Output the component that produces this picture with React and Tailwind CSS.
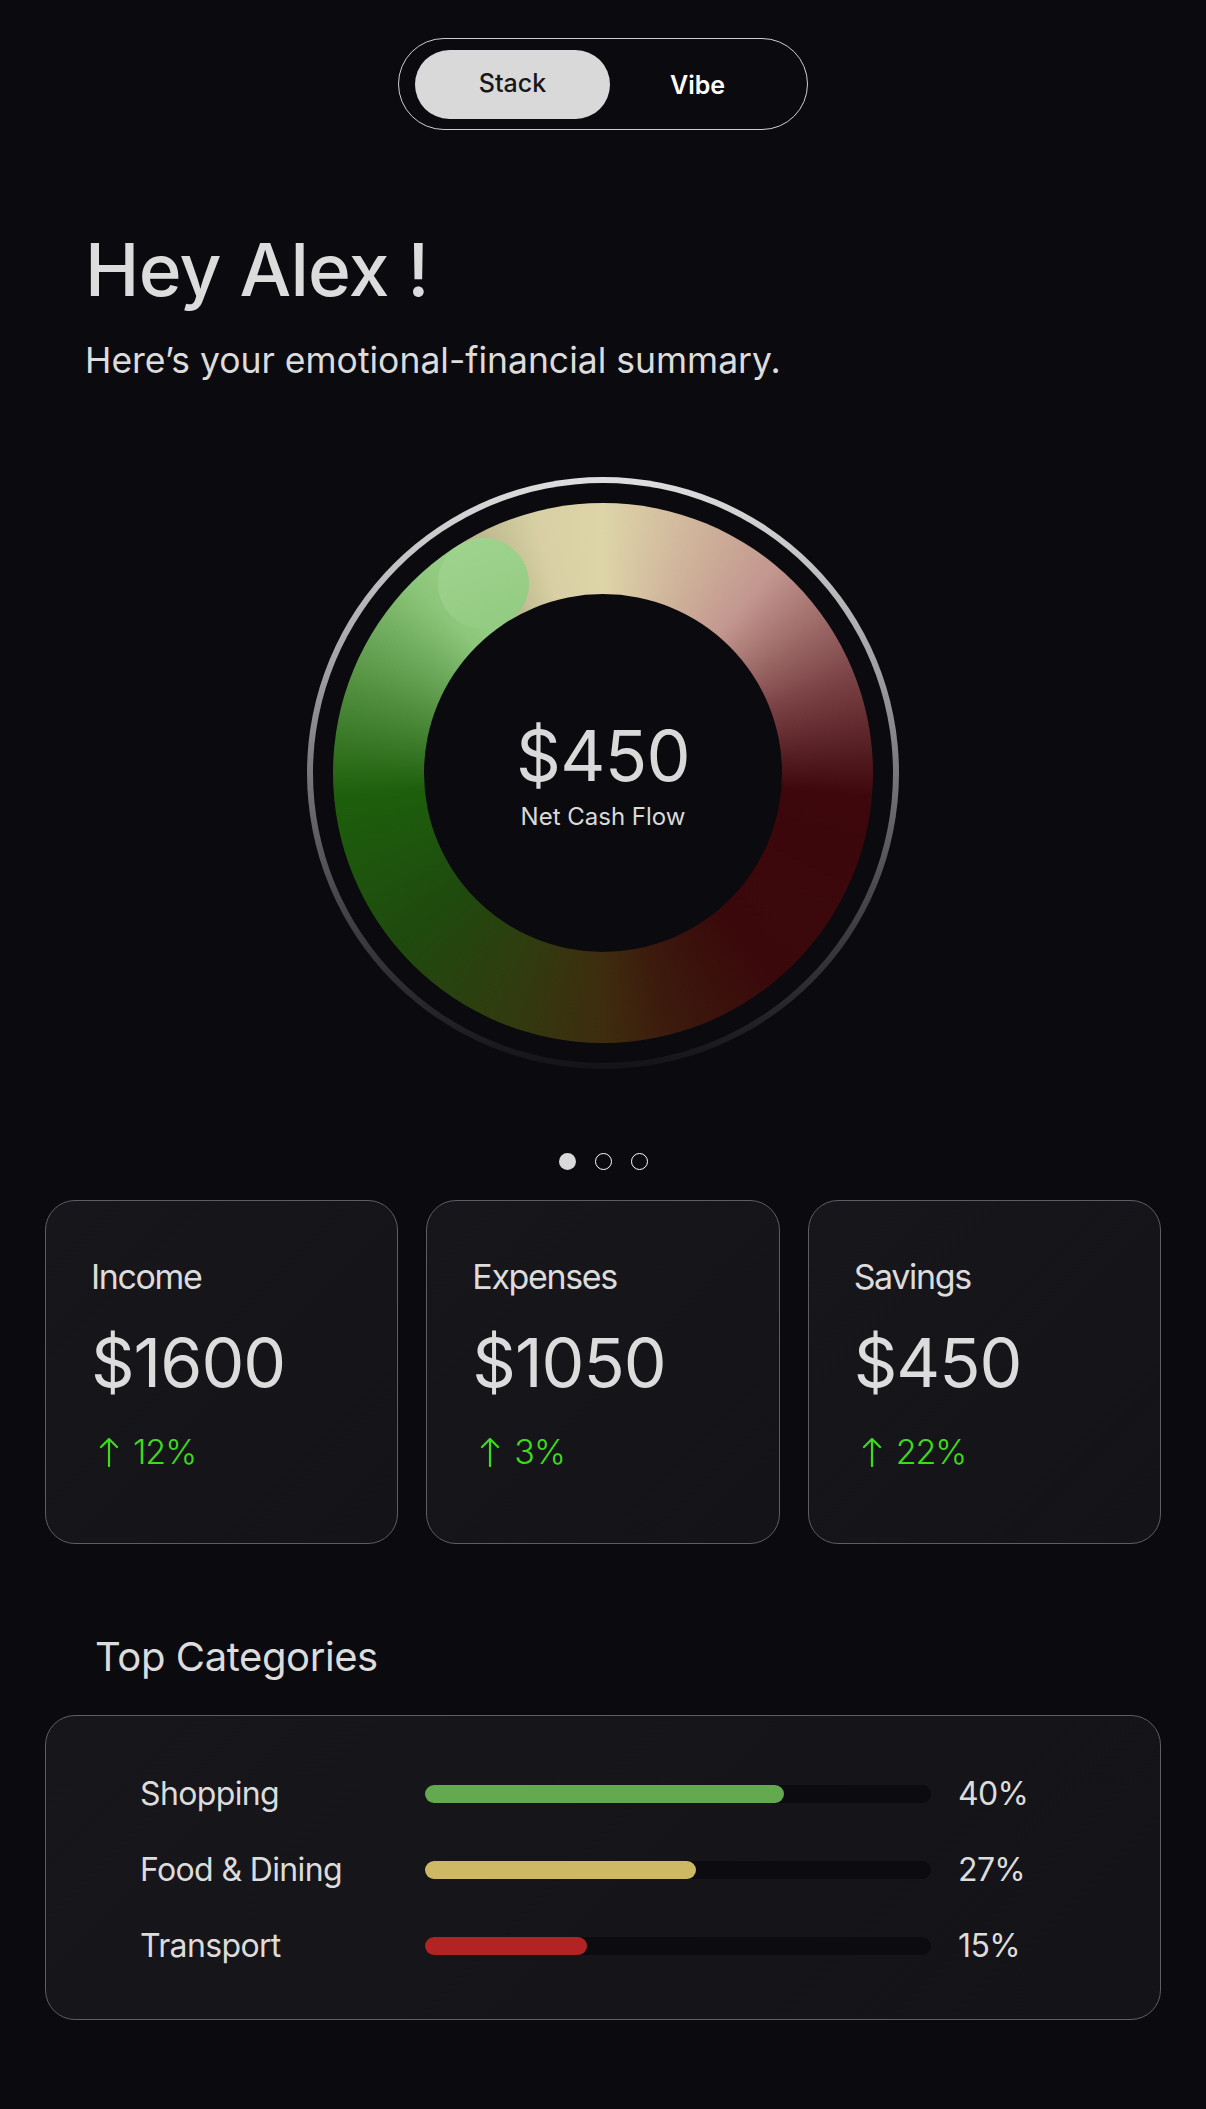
import React from "react";

const stats = [
  { label: "Income", amount: "$1600", change: "12%" },
  { label: "Expenses", amount: "$1050", change: "3%" },
  { label: "Savings", amount: "$450", change: "22%" },
];

const categories = [
  { name: "Shopping", pct: "40%", fill: 71, color: "bg-[#64a94f]" },
  { name: "Food & Dining", pct: "27%", fill: 53.5, color: "bg-[#cdb866]" },
  { name: "Transport", pct: "15%", fill: 32, color: "bg-[#b22424]" },
];

function UpArrow() {
  return (
    <svg width="20" height="30" viewBox="0 0 20 30" fill="none" className="shrink-0">
      <path d="M10 29V2M2 10l8-8 8 8" stroke="#3ddc1a" strokeWidth="2.2" strokeLinecap="round" strokeLinejoin="round" />
    </svg>
  );
}

function CashRing() {
  return (
    <div className="flex justify-center">
      <div className="relative h-[592px] w-[592px] rounded-full bg-[linear-gradient(180deg,#dedede_0%,#a6a6a8_30%,#4a494e_70%,#141318_100%)] p-[6px]">
        <div className="h-full w-full rounded-full bg-[#0b0a0f] p-[20px]">
          <div className="relative h-full w-full rounded-full bg-[conic-gradient(from_0deg,#ddd4a8_0deg,#c3978f_40deg,#7d4447_68deg,#3d070c_95deg,#3a080b_140deg,#3c1a0d_165deg,#3e2c0e_180deg,#323a0f_200deg,#1f4a0e_230deg,#1d5f0c_265deg,#5f9c4c_295deg,#8cc67a_315deg,#9bd18a_328deg,#b4b088_328deg,#d8d0a4_345deg,#ddd4a8_360deg)] p-[91px]">
            <div className="absolute left-[105px] top-[35px] h-[91px] w-[91px] rounded-full bg-[linear-gradient(160deg,#a0d48f,#92ca80)]" />
            <div className="relative flex h-full w-full flex-col items-center justify-center rounded-full bg-[#0b0a0f] pt-[4px]">
              <div className="text-[70px] leading-none tracking-[-0.01em] text-[#d9d9d9]">$450</div>
              <div className="mt-[14px] text-[24px] leading-none text-[#d9d9d9]">Net Cash Flow</div>
            </div>
          </div>
        </div>
      </div>
    </div>
  );
}

export default function App() {
  return (
    <div className="min-h-[2109px] bg-[#0b0a0f] font-['Inter','Liberation_Sans',sans-serif] text-[#dcdcdc]">
      <div className="flex justify-center pt-[38px]">
        <div className="flex h-[92px] items-center rounded-full border-[1.5px] border-[#cfcfcf] pl-[16px] pr-[22px]">
          <button className="flex h-[69px] w-[195px] items-center justify-center rounded-full bg-[#d9d9d9] text-[25px] font-medium text-[#17161a]">
            Stack
          </button>
          <button className="flex h-[69px] w-[175px] items-center justify-center pt-[4px] text-[25px] font-semibold text-white">
            Vibe
          </button>
        </div>
      </div>

      <div className="pl-[85px] pt-[103px]">
        <h1 className="text-[73px] font-medium leading-none tracking-[-0.01em] text-[#dcdcdc]">Hey Alex !</h1>
        <p className="mt-[37px] text-[35.5px] leading-none text-[#dcdcdc]">
          Here’s your emotional-financial summary.
        </p>
      </div>

      <div className="pt-[98px]">
        <CashRing />
      </div>

      <div className="flex justify-center gap-[19px] pt-[84px]">
        <span className="h-[17px] w-[17px] rounded-full bg-[#d9d9d9]" />
        <span className="h-[17px] w-[17px] rounded-full border-[1.5px] border-white" />
        <span className="h-[17px] w-[17px] rounded-full border-[1.5px] border-white" />
      </div>

      <div className="grid grid-cols-3 gap-[28px] px-[45px] pt-[30px]">
        {stats.map((s) => (
          <div
            key={s.label}
            className="h-[344px] rounded-[30px] border border-[#5e5d64] bg-[linear-gradient(135deg,#17161b,#141318)] pl-[45px] pt-[59px]"
          >
            <div className="text-[34px] leading-none tracking-[-0.04em] text-[#dcdcdc]">{s.label}</div>
            <div className="mt-[34px] text-[68px] leading-none tracking-[-0.015em] text-[#dcdcdc]">{s.amount}</div>
            <div className="mt-[39px] flex items-center gap-[14px] pl-[8px] text-[34px] font-light leading-none tracking-[-0.03em] text-[#3ddc1a]">
              <UpArrow />
              <span>{s.change}</span>
            </div>
          </div>
        ))}
      </div>

      <div className="px-[45px] pt-[93px]">
        <h2 className="pl-[50px] text-[40px] leading-none tracking-[-0.01em] text-[#dcdcdc]">Top Categories</h2>
        <div className="mt-[38px] flex h-[305px] flex-col gap-[36px] rounded-[30px] border border-[#5e5d64] bg-[linear-gradient(135deg,#17161b,#141318)] pl-[94px] pt-[58px]">
          {categories.map((c) => (
            <div key={c.name} className="flex h-[40px] items-center">
              <div className="w-[285px] text-[32px] leading-none tracking-[-0.02em] text-[#dcdcdc]">{c.name}</div>
              <div className="h-[18px] w-[506px] rounded-full bg-[#0c0b0f]">
                <div className={`h-full rounded-full ${c.color}`} style={{ width: `${c.fill}%` }} />
              </div>
              <div className="pl-[27px] text-[32px] leading-none tracking-[-0.02em] text-[#dcdcdc]">{c.pct}</div>
            </div>
          ))}
        </div>
      </div>
    </div>
  );
}
